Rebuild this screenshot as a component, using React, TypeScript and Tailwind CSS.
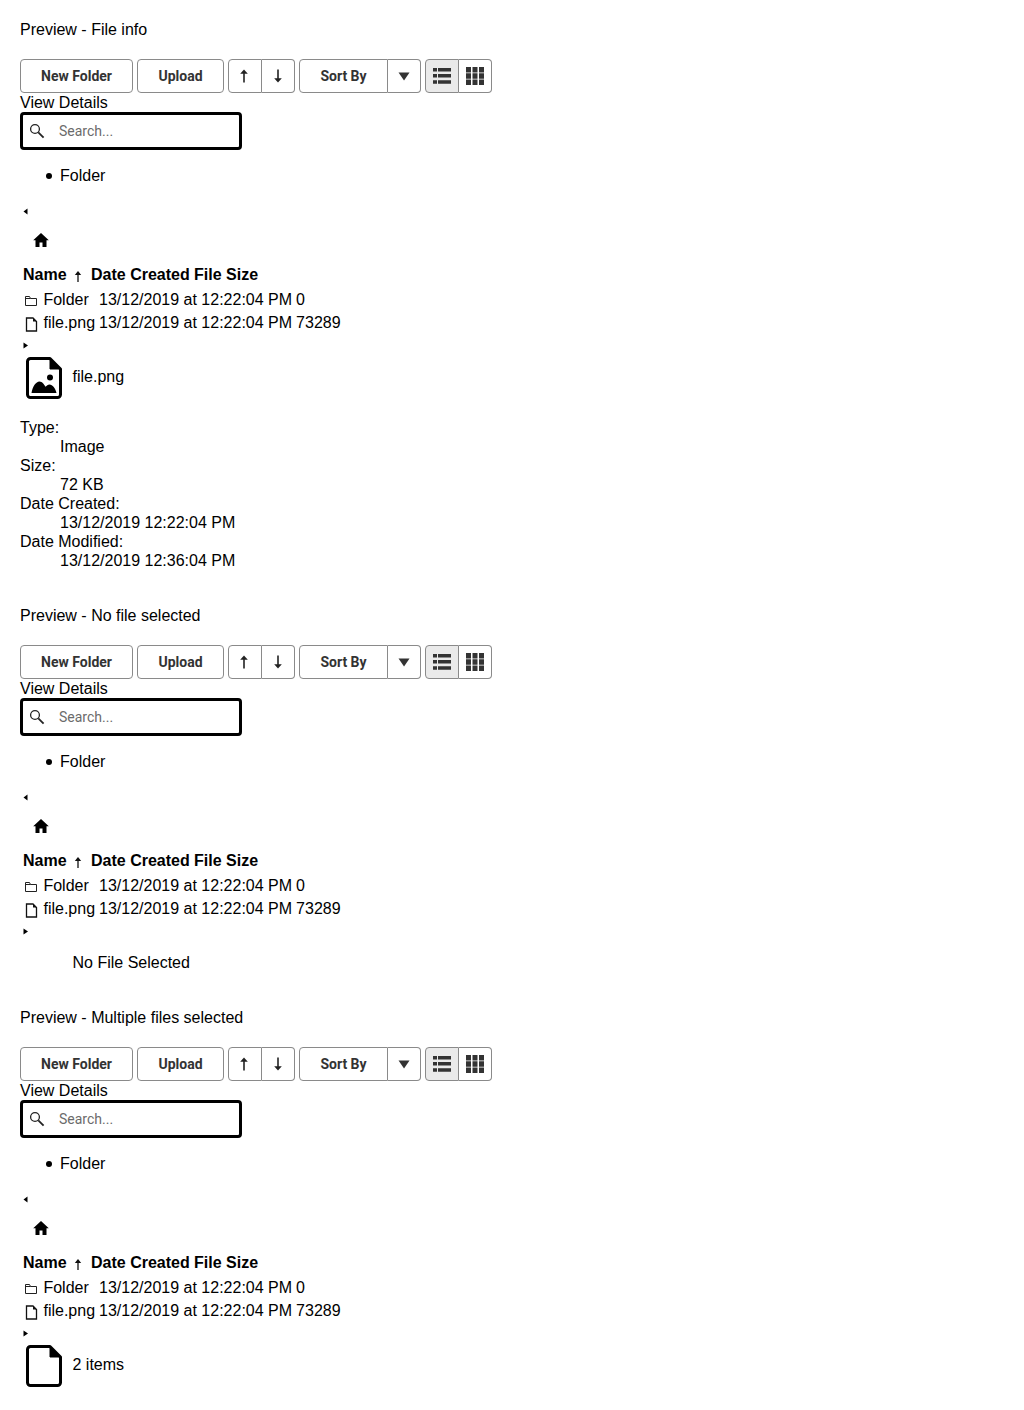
import React from "react";

const Btn = ({ children, className = "" }: { children: React.ReactNode; className?: string }) => (
  <button className={`h-[34px] border border-[#8a8a8a] bg-white flex items-center justify-center font-['Roboto',sans-serif] font-bold text-[14px] text-[#333] ${className}`}>
    {children}
  </button>
);

const Up = () => (
  <svg width="10" height="14" viewBox="0 0 10 14" fill="none"><path d="M5 13.500V3" stroke="#222" strokeWidth="1.6" /><path d="M1.200 4.800 5 .6l3.800 4.200z" fill="#222" /></svg>
);
const Down = () => (
  <svg width="10" height="14" viewBox="0 0 10 14" fill="none"><path d="M5 .5V11" stroke="#222" strokeWidth="1.6" /><path d="M1.200 9.200 5 13.400l3.800-4.200z" fill="#222" /></svg>
);

const Toolbar = () => (
  <div className="flex">
    <Btn className="w-[113px] rounded">New Folder</Btn>
    <Btn className="w-[87px] rounded ml-1">Upload</Btn>
    <Btn className="w-[34px] rounded-l ml-1"><span className="-translate-x-[1px]"><Up /></span></Btn>
    <Btn className="w-[33px] rounded-r border-l-0"><Down /></Btn>
    <Btn className="w-[89px] rounded-l ml-1">Sort By</Btn>
    <Btn className="w-[33px] rounded-r border-l-0">
      <svg width="12" height="9" viewBox="0 0 12 9"><path d="M.5.5h11L6 8.500z" fill="#333" /></svg>
    </Btn>
    <Btn className="w-[34px] rounded-l ml-1 !bg-[#eaeaea]">
      <svg width="18" height="16" viewBox="0 0 18 16" fill="#333"><path d="M0 0h4v3.500H0zM5 0h13v3.500H5zM0 6h4v3.500H0zM5 6h13v3.500H5zM0 12.200h4v3.500H0zM5 12.200h13v3.500H5z" /></svg>
    </Btn>
    <Btn className="w-[33px] rounded-r border-l-0">
      <svg width="18" height="18" viewBox="0 0 18 18" fill="#333"><path d="M0 0h5v5.500H0zM6.500 0h5v5.500h-5zM13 0h5v5.500h-5zM0 6.300h5v5.500H0zM6.500 6.300h5v5.500h-5zM13 6.300h5v5.500h-5zM0 12.500h5v5.500H0zM6.500 12.500h5v5.500h-5zM13 12.500h5v5.500h-5z" /></svg>
    </Btn>
  </div>
);

const Search = () => (
  <div className="w-[222px] h-[38px] border-[3px] border-black rounded flex items-center">
    <svg className="ml-[6px] shrink-0" width="16" height="16" viewBox="0 0 16 16" fill="none">
      <circle cx="6" cy="6" r="4.400" stroke="#222" strokeWidth="1.300" />
      <path d="M9.300 9.300 14.600 14.600" stroke="#222" strokeWidth="1.800" />
    </svg>
    <span className="ml-[14px] font-['Roboto',sans-serif] text-[14px] text-[#6b6b6b]">Search...</span>
  </div>
);

const Left = () => (
  <svg width="6" height="7" viewBox="0 0 6 7" className="block ml-[2px] -translate-y-[1px]"><path d="M5.500 .5v6L1.500 3.500z" fill="#000" /></svg>
);
const Right = () => (
  <svg width="6" height="7" viewBox="0 0 6 7" className="block ml-[3px]"><path d="M.5 .5v6l4.500-3z" fill="#000" /></svg>
);

const Folder = () => (
  <svg width="14" height="12" viewBox="0 0 14 12" fill="none" className="inline-block align-[-2px] ml-[1px] mr-[1px]">
    <path d="M1.500 10.500v-9h4l1 2h6v7z M1.500 3.500h5" stroke="#222" strokeWidth="1" />
  </svg>
);
const FileSmall = () => (
  <svg width="14" height="15" viewBox="0 0 14 15" fill="none" className="inline-block align-[-4px] ml-[1px] mr-[1px]">
    <path d="M2.500 1h6.500L12.500 4.500V14h-10z" stroke="#111" strokeWidth="1.300" />
    <path d="M9 1 12.500 4.500H9z" fill="#111" />
  </svg>
);

const Browser = () => (
  <>
    <Toolbar />
    <div className="h-[19px] leading-[19px]">View Details</div>
    <Search />
    <div className="flex items-center pl-[26px] mt-4 h-[19px] leading-[19px]">
      <span className="w-[6px] h-[6px] rounded-full bg-black mr-[8px]" />
      <span>Folder</span>
    </div>
    <div className="mt-[24px] h-[6px]"><Left /></div>
    <div className="mt-[18px] pl-[13px] h-[16px]">
      <svg width="16" height="14" viewBox="0 0 16 14" fill="#000" className="block"><path d="M8 0 .2 7.200h2.300V14h4V9.500h3V14h4V7.200h2.300z" /></svg>
    </div>
    <table className="mt-[16px] border-separate border-spacing-x-[2px] border-spacing-y-0 leading-[19px]">
      <thead>
        <tr className="h-[19px]">
          <th className="px-[1px] w-[66px] font-bold text-left whitespace-nowrap">Name <svg width="8" height="11" viewBox="0 0 8 11" className="inline-block align-[-2px] ml-[3px]"><path d="M4 11V3" stroke="#111" strokeWidth="1.300" /><path d="M.8 4 4 0l3.200 4z" fill="#111" /></svg></th>
          <th className="px-[1px] w-[101px] font-bold text-left whitespace-nowrap">Date Created</th>
          <th className="px-[1px] font-bold text-left whitespace-nowrap">File Size</th>
        </tr>
      </thead>
    </table>
    <table className="mt-[4px] border-separate border-spacing-x-[2px] border-spacing-y-0 leading-[19px]">
      <tbody>
        <tr className="h-[23px]">
          <td className="px-[1px] whitespace-nowrap"><Folder /> Folder</td>
          <td className="px-[1px] whitespace-nowrap">13/12/2019 at 12:22:04 PM</td>
          <td className="px-[1px]">0</td>
        </tr>
        <tr className="h-[23px]">
          <td className="px-[1px] whitespace-nowrap"><FileSmall /> file.png</td>
          <td className="px-[1px] whitespace-nowrap">13/12/2019 at 12:22:04 PM</td>
          <td className="px-[1px]">73289</td>
        </tr>
      </tbody>
    </table>
    <div className="mt-[8px] h-[6px]"><Right /></div>
  </>
);

const BigFile = ({ image }: { image?: boolean }) => (
  <svg width="36" height="42" viewBox="0 0 36 42" className="block">
    <path d="M4.500 1.500H24L34.500 12V37.500a3 3 0 0 1-3 3H4.500a3 3 0 0 1-3-3V4.500a3 3 0 0 1 3-3z" fill="#fff" stroke="#000" strokeWidth="3" strokeLinejoin="round" />
    <path d="M24 1.500 34.500 12H24z" fill="#000" stroke="#000" strokeWidth="1" />
    {image && (
      <>
        <circle cx="24" cy="20.500" r="3" fill="#000" />
        <path d="M5.500 36c1-6.500 4.500-11.500 8-11.500 2.800 0 4.500 2.800 6 5.300 1.200-1.300 2.400-2.300 4-2.300 3 0 6 4 7 8.500z" fill="#000" />
      </>
    )}
  </svg>
);

const Info = ({ k, v }: { k: string; v: string }) => (
  <>
    <div>{k}</div>
    <div className="ml-10">{v}</div>
  </>
);

export default function App() {
  return (
    <div className="px-5 pt-5 font-['Liberation_Sans',Arial,sans-serif] text-[16px] text-black bg-white min-h-[1410px] leading-[19px]">
      <div className="h-[19px]">Preview - File info</div>
      <div className="mt-5"><Browser /></div>
      <div className="mt-[9px] flex items-center h-[42px] pl-[6px]">
        <BigFile image />
        <span className="ml-[10.5px] -mt-[3px]">file.png</span>
      </div>
      <div className="mt-[19px]">
        <Info k="Type:" v="Image" />
        <Info k="Size:" v="72 KB" />
        <Info k="Date Created:" v="13/12/2019 12:22:04 PM" />
        <Info k="Date Modified:" v="13/12/2019 12:36:04 PM" />
      </div>

      <div className="mt-[36px] h-[19px]">Preview - No file selected</div>
      <div className="mt-5"><Browser /></div>
      <div className="mt-[9px] flex items-center h-[42px] pl-[52.5px]"><span className="-mt-[3px]">No File Selected</span></div>

      <div className="mt-[23px] h-[19px]">Preview - Multiple files selected</div>
      <div className="mt-5"><Browser /></div>
      <div className="mt-[9px] flex items-center h-[42px] pl-[6px]">
        <BigFile />
        <span className="ml-[10.5px] -mt-[3px]">2 items</span>
      </div>
    </div>
  );
}
